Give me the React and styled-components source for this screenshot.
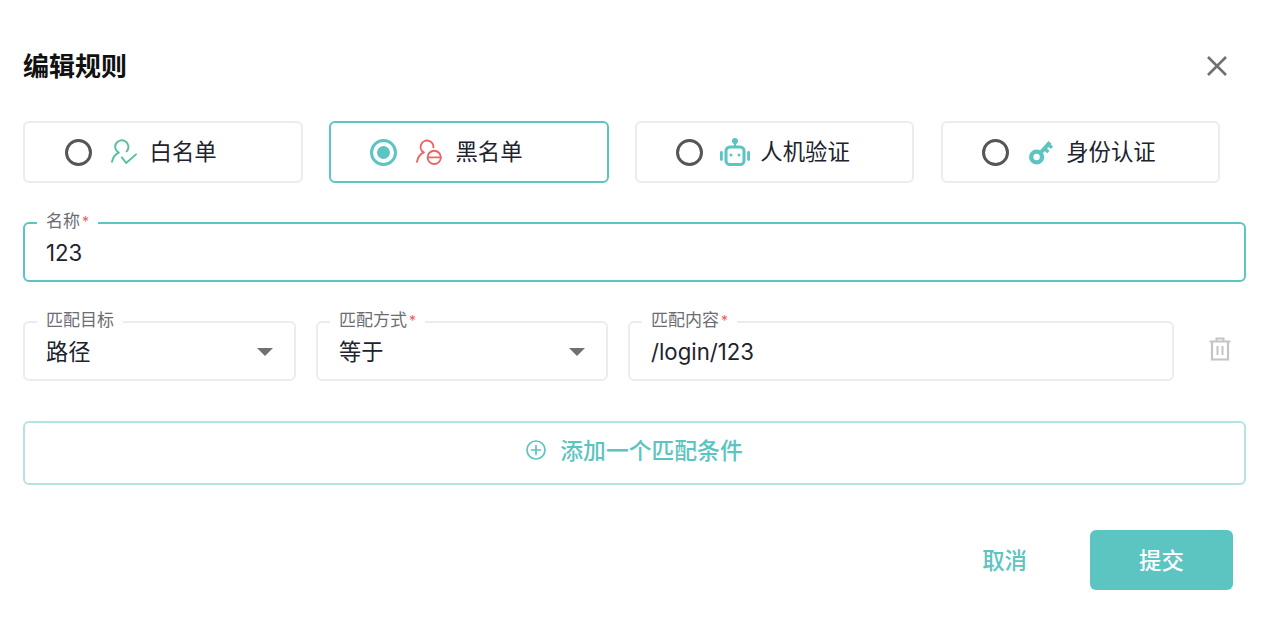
import React from 'react';
import styled, { createGlobalStyle } from 'styled-components';

const teal = '#5cc4c1';
const cjk = '"Inter", "Noto Sans CJK SC", sans-serif';

const GlobalStyle = createGlobalStyle`
  html, body {
    margin: 0;
    padding: 0;
    background: #fff;
  }
  body {
    font-family: ${cjk};
    color: #21222d;
  }
`;

const Dialog = styled.div`
  width: 1280px;
  height: 631px;
  box-sizing: border-box;
  padding: 0 34px 0 23px;
  overflow: hidden;
  display: flex;
  flex-direction: column;
`;

// Title bar
const Header = styled.div`
  height: 121px;
  box-sizing: border-box;
  display: flex;
  align-items: center;
  justify-content: space-between;
  padding: 13px 17px 0 0;
`;

const Title = styled.h2`
  margin: 0;
  font-size: 26px;
  line-height: 32px;
  font-weight: 700;
  color: #111;
`;

const CloseButton = styled.button`
  width: 24px;
  height: 24px;
  padding: 0;
  border: 0;
  background: none;
  color: #6e7076;
  display: flex;
  align-items: center;
  justify-content: center;
  position: relative;
  top: -1px;
`;

// Rule type selector
const TypeRow = styled.div`
  display: flex;
  gap: 26.2px;
  margin-bottom: 39px;
`;

const TypeCard = styled.div`
  width: 279.7px;
  height: 62px;
  box-sizing: border-box;
  border: 2px solid ${(p) => (p.$active ? teal : '#e9ecf1')};
  border-radius: 6px;
  display: flex;
  align-items: center;
  padding-left: 39.5px;
`;

const Radio = styled.span`
  width: 27px;
  height: 27px;
  box-sizing: border-box;
  border-radius: 50%;
  border: 3px solid ${(p) => (p.$active ? teal : '#565656')};
  display: flex;
  align-items: center;
  justify-content: center;
  flex-shrink: 0;
  margin-right: ${(p) => p.$gap}px;

  &::after {
    content: '';
    display: ${(p) => (p.$active ? 'block' : 'none')};
    width: 13px;
    height: 13px;
    border-radius: 50%;
    background: ${teal};
  }
`;

const TypeLabel = styled.span`
  margin-left: ${(p) => p.$gap}px;
  font-size: 22.4px;
  line-height: 30px;
  color: #21222d;
`;

// Outlined fields
const Field = styled.div`
  position: relative;
  box-sizing: border-box;
  width: ${(p) => p.$width}px;
  height: 60px;
  border: 2px solid ${(p) => (p.$focused ? teal : '#e9ecf1')};
  border-radius: 6px;
  display: flex;
  align-items: center;
  padding: 2px 21px 0;
  flex-shrink: 0;
`;

const FieldLabel = styled.label`
  position: absolute;
  left: 12px;
  top: -13px;
  padding: 0 9px;
  background: #fff;
  font-size: 17px;
  line-height: 20px;
  color: #6b6d73;
  white-space: nowrap;
`;

const Required = styled.span`
  color: #ef5b5b;
  font-size: 14px;
  margin-left: 2px;
`;

const FieldValue = styled.span`
  flex: 1;
  font-size: 22.2px;
  line-height: 30px;
  color: #21222d;
`;

const Caret = styled.span`
  width: 0;
  height: 0;
  border-left: 8px solid transparent;
  border-right: 8px solid transparent;
  border-top: 8px solid #707070;
`;

const NameRow = styled.div`
  margin-bottom: 39px;
`;

const MatchRow = styled.div`
  display: flex;
  align-items: center;
  gap: 20px;
  margin-bottom: 40px;
`;

const TrashButton = styled.button`
  margin-left: 14px;
  width: 24px;
  height: 28px;
  padding: 0;
  border: 0;
  background: none;
  color: #c4c4c4;
  display: flex;
  align-items: center;
  justify-content: center;
  position: relative;
  top: -2px;
`;

const AddButton = styled.button`
  width: 1223px;
  height: 64px;
  box-sizing: border-box;
  border: 2px solid #b5e3e2;
  border-radius: 6px;
  background: #fff;
  color: ${teal};
  font-family: ${cjk};
  font-size: 22.8px;
  font-weight: 500;
  display: flex;
  align-items: center;
  justify-content: center;
  gap: 14px;
  padding: 0 0 7px;
  margin-bottom: 45px;
`;

// Footer actions
const Footer = styled.div`
  display: flex;
  justify-content: flex-end;
  align-items: center;
  padding-right: 13px;
`;

const CancelButton = styled.button`
  border: 0;
  background: none;
  padding: 0 0 2px;
  margin-right: 63px;
  color: ${teal};
  font-family: ${cjk};
  font-size: 22.4px;
  font-weight: 500;
`;

const SubmitButton = styled.button`
  width: 143px;
  height: 60px;
  border: 0;
  border-radius: 6px;
  padding: 0 0 2px;
  background: ${teal};
  color: #fff;
  font-family: ${cjk};
  font-size: 22.4px;
  font-weight: 500;
`;

const WhitelistIcon = () => (
  <svg width="26" height="26" viewBox="0 0 26 26" fill="none" stroke="#52c0a0" strokeWidth="1.9" strokeLinecap="round" strokeLinejoin="round">
    <path d="M15.6 12.4A6.6 6.6 0 1 0 7.6 13.6" />
    <path d="M7.6 13.6C4.2 15.4 1.8 18.6 1 22.8" />
    <path d="M10.8 18.4l4.4 5.6 9.8-8.6" />
  </svg>
);

const BlacklistIcon = () => (
  <svg width="26" height="26" viewBox="0 0 26 26" fill="none" stroke="#ee6464" strokeWidth="1.9" strokeLinecap="round" strokeLinejoin="round">
    <path d="M17.4 8.4A6.4 6.4 0 1 0 7.6 13.4" />
    <path d="M7.6 13.4C4.2 15.2 1.8 18.6 1 22.8" />
    <circle cx="18.2" cy="18.4" r="6.6" />
    <path d="M11.8 18.4h12.8" />
  </svg>
);

const RobotIcon = () => (
  <svg width="30" height="28" viewBox="0 0 30 28" fill="none">
    <circle cx="15" cy="3" r="3" fill={teal} />
    <path d="M15 4v5" stroke={teal} strokeWidth="2.2" />
    <rect x="6" y="9" width="18" height="17.6" rx="4" stroke={teal} strokeWidth="3" />
    <circle cx="11" cy="17" r="1.5" fill={teal} />
    <circle cx="19" cy="17" r="1.5" fill={teal} />
    <rect x="0" y="13" width="2.8" height="10" rx="1.4" fill={teal} />
    <rect x="27.2" y="13" width="2.8" height="10" rx="1.4" fill={teal} />
  </svg>
);

const KeyIcon = () => (
  <svg width="24" height="26" viewBox="0 0 24 26" fill="none">
    <circle cx="7.6" cy="18" r="5.4" stroke={teal} strokeWidth="4.4" />
    <path d="M11 14.4L21 3.4" stroke={teal} strokeWidth="4" />
    <path d="M15.4 9.6l4 3.4M19 5.4l4 3.4" stroke={teal} strokeWidth="3.4" />
  </svg>
);

const CloseIcon = () => (
  <svg width="22" height="22" viewBox="0 0 22 22" fill="none" stroke="currentColor" strokeWidth="2.6">
    <path d="M2 2l18 18M20 2L2 20" />
  </svg>
);

const TrashIcon = () => (
  <svg width="22" height="24" viewBox="0 0 22 24" fill="none" stroke="currentColor">
    <path d="M0.5 4.5h21" strokeWidth="2" />
    <path d="M7.5 4V1.5h7V4" strokeWidth="2" />
    <path d="M3 5v17.5h16V5" strokeWidth="2.2" />
    <path d="M8.5 9v9M13.5 9v9" strokeWidth="2" />
  </svg>
);

const PlusCircleIcon = () => (
  <svg width="20" height="20" viewBox="0 0 20 20" fill="none" stroke={teal} strokeWidth="1.7" strokeLinecap="round">
    <circle cx="10" cy="10" r="9" />
    <path d="M5.5 10h9M10 5.5v9" />
  </svg>
);

const ruleTypes = [
  { label: '白名单', icon: <WhitelistIcon />, gap: 19, labelGap: 13 },
  { label: '黑名单', icon: <BlacklistIcon />, gap: 19, labelGap: 13, active: true },
  { label: '人机验证', icon: <RobotIcon />, gap: 17, labelGap: 10 },
  { label: '身份认证', icon: <KeyIcon />, gap: 20, labelGap: 13 },
];

const App = () => {
  return (
    <Dialog>
      <GlobalStyle />
      <Header>
        <Title>编辑规则</Title>
        <CloseButton>
          <CloseIcon />
        </CloseButton>
      </Header>

      <TypeRow>
        {ruleTypes.map((t) => (
          <TypeCard key={t.label} $active={t.active}>
            <Radio $active={t.active} $gap={t.gap} />
            {t.icon}
            <TypeLabel $gap={t.labelGap}>{t.label}</TypeLabel>
          </TypeCard>
        ))}
      </TypeRow>

      <NameRow>
        <Field $width={1223} $focused>
          <FieldLabel>名称<Required>*</Required></FieldLabel>
          <FieldValue>123</FieldValue>
        </Field>
      </NameRow>

      <MatchRow>
        <Field $width={273}>
          <FieldLabel>匹配目标</FieldLabel>
          <FieldValue>路径</FieldValue>
          <Caret />
        </Field>
        <Field $width={292}>
          <FieldLabel>匹配方式<Required>*</Required></FieldLabel>
          <FieldValue>等于</FieldValue>
          <Caret />
        </Field>
        <Field $width={546}>
          <FieldLabel>匹配内容<Required>*</Required></FieldLabel>
          <FieldValue>/login/123</FieldValue>
        </Field>
        <TrashButton>
          <TrashIcon />
        </TrashButton>
      </MatchRow>

      <AddButton>
        <PlusCircleIcon />
        添加一个匹配条件
      </AddButton>

      <Footer>
        <CancelButton>取消</CancelButton>
        <SubmitButton>提交</SubmitButton>
      </Footer>
    </Dialog>
  );
};

export default App;
